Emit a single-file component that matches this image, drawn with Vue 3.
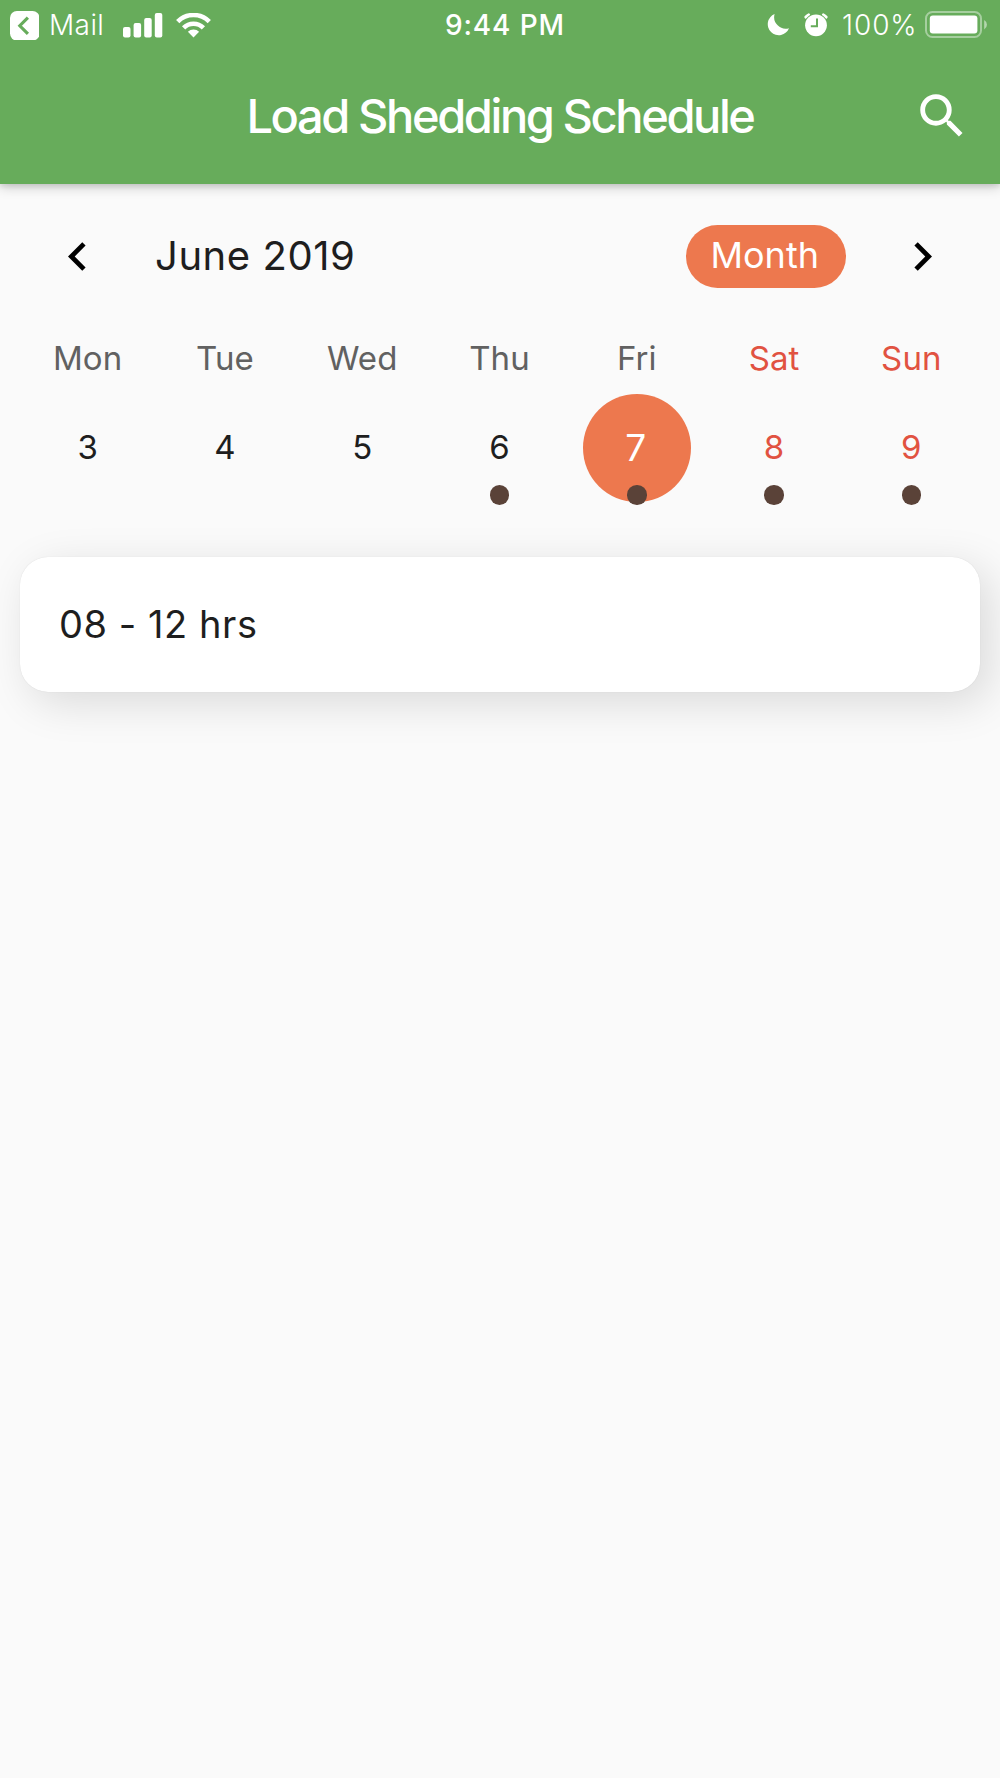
<template>
  <div class="screen">
    <header class="app-header">
      <div class="status-bar">
        <div class="status-left">
          <svg class="back-icon" viewBox="0 0 30 30">
            <rect width="30" height="30" rx="7" fill="#fff" />
            <path d="M18.2 6.8 L10 15 L18.2 23.2" fill="none" stroke="#67ac5b" stroke-width="3.2" />
          </svg>
          <span class="back-label">Mail</span>
          <svg class="signal-icon" viewBox="0 0 40 26" fill="#fff">
            <rect x="0" y="14" width="7.5" height="10.5" rx="2" />
            <rect x="10.6" y="10" width="7.5" height="14.5" rx="2" />
            <rect x="21.2" y="5" width="7.5" height="19.5" rx="2" />
            <rect x="31.8" y="0" width="7.5" height="24.5" rx="2" />
          </svg>
          <svg class="wifi-icon" viewBox="0 0 35 26">
            <g fill="none" stroke="#fff" stroke-width="4.6">
              <path d="M1.7 8.6 A22.3 22.3 0 0 1 33.3 8.6" />
              <path d="M7.6 14.8 A14 14 0 0 1 27.4 14.8" />
            </g>
            <path d="M17.5 24.4 L11.9 18.7 A8 8 0 0 1 23.1 18.7 Z" fill="#fff" />
          </svg>
        </div>
        <span class="clock">9:44 PM</span>
        <div class="status-right">
          <svg class="moon-icon" viewBox="0 0 22 22">
            <path d="M7.6 0 A11 11 0 1 0 22 14.2 A11.6 11.6 0 0 1 7.6 0 Z" fill="#fff" />
          </svg>
          <svg class="alarm-icon" viewBox="0 0 24 24">
            <path
              d="M1.9 4.1 A16 16 0 0 1 4.6 1.9 M22.1 4.1 A16 16 0 0 0 19.4 1.9"
              fill="none"
              stroke="#fff"
              stroke-width="3"
              stroke-linecap="round"
            />
            <circle cx="12" cy="12.3" r="11.9" fill="#67ac5b" />
            <circle cx="12" cy="12.3" r="10.9" fill="#fff" />
            <path d="M13 5.6 V13.3 H6.8" fill="none" stroke="#67ac5b" stroke-width="2" />
          </svg>
          <span class="battery-label">100%</span>
          <svg class="battery-icon" viewBox="0 0 64 28">
            <rect x="1" y="1" width="55" height="25" rx="6.5" fill="none" stroke="#fff" stroke-opacity="0.42" stroke-width="2" />
            <rect x="4.8" y="4.6" width="47.6" height="17.8" rx="3" fill="#fff" />
            <path d="M59.2 9 A5.4 5.4 0 0 1 59.2 18.4 Z" fill="#fff" fill-opacity="0.5" />
          </svg>
        </div>
      </div>
      <div class="title-bar">
        <h1 class="title">Load Shedding Schedule</h1>
        <svg class="search-icon" viewBox="0 0 24 24">
          <path
            d="M15.5 14h-.79l-.28-.27A6.471 6.471 0 0 0 16 9.5 6.5 6.5 0 1 0 9.5 16c1.61 0 3.09-.59 4.23-1.57l.27.28v.79l5 4.99L20.49 19l-4.99-5zm-6 0C7.01 14 5 11.99 5 9.5S7.01 5 9.5 5 14 7.01 14 9.5 11.99 14 9.5 14z"
            fill="#fff"
          />
        </svg>
      </div>
    </header>

    <div class="month-bar">
      <svg class="chevron" viewBox="0 0 24 24">
        <path d="M15.41 7.41L14 6l-6 6 6 6 1.41-1.41L10.83 12z" />
      </svg>
      <span class="month-name">June 2019</span>
      <button class="format-button">Month</button>
      <svg class="chevron" viewBox="0 0 24 24">
        <path d="M10 6L8.59 7.41 13.17 12l-4.58 4.59L10 18l6-6z" />
      </svg>
    </div>

    <div class="week">
      <div
        v-for="day in days"
        :key="day.date"
        class="day"
        :class="{ weekend: day.weekend, selected: day.date === selectedDate }"
        @click="selectedDate = day.date"
      >
        <span class="day-name">{{ day.name }}</span>
        <div class="day-cell">
          <span class="day-date">{{ day.date }}</span>
          <span v-if="day.event" class="dot"></span>
        </div>
      </div>
    </div>

    <div v-for="slot in slots" :key="slot" class="slot-card">{{ slot }}</div>
  </div>
</template>

<script setup>
import { ref } from "vue";

const selectedDate = ref(7);

const days = [
  { name: "Mon", date: 3 },
  { name: "Tue", date: 4 },
  { name: "Wed", date: 5 },
  { name: "Thu", date: 6, event: true },
  { name: "Fri", date: 7, event: true },
  { name: "Sat", date: 8, event: true, weekend: true },
  { name: "Sun", date: 9, event: true, weekend: true },
];

const slots = ["08 - 12 hrs"];
</script>

<style>
body {
  background-color: #fafafa;
}
</style>

<style scoped>
.screen {
  width: 1000px;
  min-height: 1778px;
  background-color: #fafafa;
  font-family: Inter, "Liberation Sans", sans-serif;
  color: #1e1e1e;
  overflow: hidden;
}

.app-header {
  height: 183.5px;
  background-color: #67ac5b;
  color: #fff;
  box-shadow: 0 2px 12px rgba(0, 0, 0, 0.24), 0 3px 4px rgba(0, 0, 0, 0.06);
}

.status-bar {
  display: grid;
  grid-template-columns: 1fr auto 1fr;
  height: 51px;
  padding: 0 11.5px 0 9.5px;
}

.status-left,
.status-right {
  display: flex;
  align-items: center;
}

.status-right {
  justify-content: flex-end;
}

.back-icon {
  width: 29.5px;
  height: 29.5px;
}

.back-label {
  margin-left: 10px;
  width: 74px;
  font-size: 28px;
  font-weight: 300;
  letter-spacing: 0.4px;
  line-height: 51px;
}

.signal-icon {
  width: 40px;
  height: 26px;
}

.wifi-icon {
  margin-left: 13px;
  width: 35px;
  height: 26px;
}

.clock {
  font-size: 28px;
  font-weight: 500;
  letter-spacing: 0.9px;
  line-height: 51px;
  padding-left: 12px;
}

.moon-icon {
  width: 22px;
  height: 22px;
  margin-right: 15px;
  margin-bottom: 2px;
}

.alarm-icon {
  width: 24px;
  height: 24px;
  margin-bottom: 2px;
}

.battery-label {
  margin-left: 14px;
  margin-right: 7px;
  font-size: 28px;
  font-weight: 300;
  letter-spacing: 0.9px;
  line-height: 51px;
}

.battery-icon {
  width: 64px;
  height: 28px;
  margin-bottom: 1px;
}

.title-bar {
  display: grid;
  grid-template-columns: 58px 1fr 58px;
  align-items: center;
  height: 130px;
  padding: 0 29px;
}

.title {
  grid-column: 2;
  margin: 0;
  text-align: center;
  font-size: 47px;
  font-weight: 500;
  letter-spacing: -2.4px;
  line-height: 60px;
}

.search-icon {
  width: 58px;
  height: 58px;
}

.month-bar {
  display: flex;
  align-items: center;
  height: 64px;
  margin-top: 40.5px;
  padding: 0 49px;
}

.chevron {
  width: 57px;
  height: 57px;
}

.month-name {
  flex: 1;
  margin-left: 49px;
  padding-bottom: 1px;
  font-size: 40px;
  letter-spacing: 0.55px;
}

.format-button {
  width: 159.5px;
  height: 63px;
  margin-right: 48.5px;
  padding: 0 2px 2px 0;
  border: none;
  border-radius: 32px;
  background-color: #ed784e;
  color: #fff;
  font-family: inherit;
  font-size: 36px;
  letter-spacing: 0;
}

.week {
  display: grid;
  grid-template-columns: repeat(7, 1fr);
  margin: 49.5px 20px 0 19px;
}

.day {
  display: flex;
  flex-direction: column;
  align-items: center;
}

.day-name {
  font-size: 33px;
  line-height: 40px;
  letter-spacing: 0.1px;
  color: #616161;
}

.day-cell {
  position: relative;
  display: flex;
  align-items: center;
  justify-content: center;
  width: 108.5px;
  height: 108.5px;
  margin-top: 16px;
  border-radius: 50%;
}

.day-date {
  padding: 0 0 2px;
  font-size: 33px;
}

.weekend .day-name,
.weekend .day-date {
  color: #e15241;
}

.selected .day-cell {
  background-color: #ed784e;
}

.selected .day-date {
  padding: 0 2px 0 0;
  font-size: 37px;
  color: #fff;
}

.dot {
  position: absolute;
  bottom: -2.5px;
  left: 44.5px;
  width: 19.5px;
  height: 19.5px;
  border-radius: 50%;
  background-color: #5a4238;
}

.slot-card {
  display: flex;
  align-items: center;
  height: 135px;
  margin: 54.5px 20px 0;
  padding: 0 39px 1px;
  box-sizing: border-box;
  border-radius: 28px;
  background-color: #fff;
  box-shadow: 0 0 1px rgba(0, 0, 0, 0.14), 10px 11px 44px rgba(0, 0, 0, 0.13);
  font-size: 38px;
  letter-spacing: 0.55px;
}
</style>
